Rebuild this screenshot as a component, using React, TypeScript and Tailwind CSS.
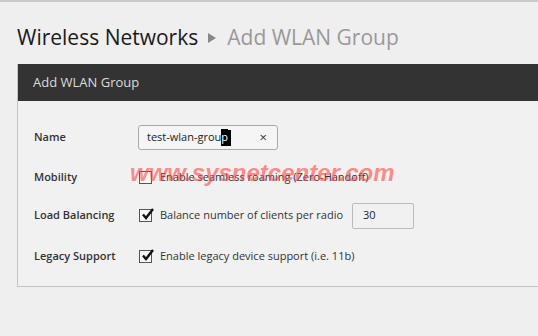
const font = { fontFamily: '"Open Sans", "Liberation Sans", sans-serif' };

function Check({ checked }: { checked: boolean }) {
  return (
    <span className="relative flex h-[13px] w-[13px] shrink-0 items-center justify-center border border-[#555] bg-[#f8f8f8]">
      {checked && (
        <svg viewBox="0 0 14 14" className="absolute -top-[3px] left-[1px] h-[14px] w-[14px]">
          <path d="M2 7.5 L5 11 L12 2" fill="none" stroke="#111" strokeWidth="2.4" />
        </svg>
      )}
    </span>
  );
}

function Row({ label, className, children }: { label: string; className?: string; children: React.ReactNode }) {
  return (
    <div className={"flex h-[25px] items-center " + (className ?? "")}>
      <div className="w-[104px] text-[11px] font-semibold text-[#333]">{label}</div>
      <div className="flex items-center">{children}</div>
    </div>
  );
}

export default function App() {
  return (
    <div className="relative h-[336px] w-[538px] overflow-hidden border-t-2 border-[#c9c9c9] bg-[#efefef]" style={font}>
      <h1 className="flex items-center pl-[17px] pt-[19px] text-[21px] leading-[32px] text-[#1a1a1a]">
        <span>Wireless Networks</span>
        <svg viewBox="0 0 8 10" className="ml-[10px] mr-[11px] mt-[2px] h-[10px] w-[8px]">
          <path d="M0 0 L8 5 L0 10 Z" fill="#888" />
        </svg>
        <span className="text-[#999]">Add WLAN Group</span>
      </h1>
      <div className="ml-[17px] mt-[11px] border-b border-l border-[#c4c4c4] bg-[#f1f1f1]">
        <div className="flex h-[37px] items-center bg-[#333] pl-[15px] text-[13px] text-[#ddd]">Add WLAN Group</div>
        <div className="flex flex-col pb-[17px] pl-[16px] pt-[24px]">
          <Row label="Name">
            <div className="flex h-[25px] w-[140px] items-center justify-between rounded-[3px] border border-[#aaa] bg-[#f5f5f5] pl-[8px] pr-[10px] text-[11px] text-[#222]">
              <span className="flex items-center">
                test-wlan-grou<span className="bg-black text-white">p</span>
                <span className="h-[16px] w-[3px] bg-black" />
              </span>
              <span className="text-[13px] text-[#333]">×</span>
            </div>
          </Row>
          <Row label="Mobility" className="mt-[15px]">
            <div className="ml-[1px] flex items-center gap-[8px] text-[11px] text-[#333]">
              <Check checked={false} />
              <span>Enable seamless roaming (Zero-Handoff)</span>
            </div>
          </Row>
          <Row label="Load Balancing" className="mt-[13px]">
            <div className="ml-[1px] flex items-center gap-[8px] text-[11px] text-[#333]">
              <Check checked={true} />
              <span>Balance number of clients per radio</span>
              <div className="ml-[1px] flex h-[26px] w-[62px] items-center rounded-[2px] border border-[#bbb] bg-[#f1f1f1] pl-[10px] text-[11px] text-[#222]">
                30
              </div>
            </div>
          </Row>
          <Row label="Legacy Support" className="mt-[16px]">
            <div className="ml-[1px] flex items-center gap-[8px] text-[11px] text-[#333]">
              <Check checked={true} />
              <span>Enable legacy device support (i.e. 11b)</span>
            </div>
          </Row>
        </div>
      </div>
      <div className="pointer-events-none absolute left-[130px] top-[153px] text-[24px] font-bold italic text-[rgba(255,70,70,0.6)]" style={{ fontFamily: '"Liberation Sans", sans-serif' }}>
        www.sysnetcenter.com
      </div>
    </div>
  );
}
